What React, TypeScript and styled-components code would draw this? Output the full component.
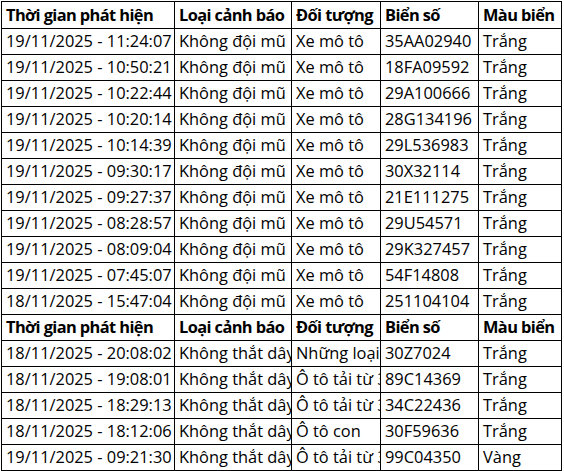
import React from "react";
import styled, { createGlobalStyle } from "styled-components";

const GlobalStyle = createGlobalStyle`
  html, body {
    margin: 0;
    padding: 0;
    background: #ffffff;
  }
`;

// Grid of cells, like an Excel sheet
const Sheet = styled.div`
  display: grid;
  grid-template-columns: 173px 117px 89px 98px 83px;
  grid-template-rows: 27px;
  grid-auto-rows: 26px;
  width: max-content;
  margin: 1px 0 0 1px;
  border-top: 1px solid #000;
  border-left: 1px solid #000;
  font-family: "Open Sans", "Noto Sans", sans-serif;
  font-size: 16.4px;
  color: #000;
`;

const Cell = styled.div<{ $head?: boolean }>`
  display: flex;
  align-items: flex-end;
  box-sizing: border-box;
  padding: 0 0 2px 4px;
  border-right: 1px solid #000;
  border-bottom: 1px solid #000;
  overflow: hidden;
  white-space: nowrap;
  line-height: 22px;
  font-weight: ${(p) => (p.$head ? 700 : 400)};
  letter-spacing: ${(p) => (p.$head ? "-0.6px" : "0")};
`;

const headers = ["Thời gian phát hiện", "Loại cảnh báo", "Đối tượng", "Biển số", "Màu biển"];

const helmetRows: string[][] = [
  ["19/11/2025 - 11:24:07", "35AA02940"],
  ["19/11/2025 - 10:50:21", "18FA09592"],
  ["19/11/2025 - 10:22:44", "29A100666"],
  ["19/11/2025 - 10:20:14", "28G134196"],
  ["19/11/2025 - 10:14:39", "29L536983"],
  ["19/11/2025 - 09:30:17", "30X32114"],
  ["19/11/2025 - 09:27:37", "21E111275"],
  ["19/11/2025 - 08:28:57", "29U54571"],
  ["19/11/2025 - 08:09:04", "29K327457"],
  ["19/11/2025 - 07:45:07", "54F14808"],
  ["18/11/2025 - 15:47:04", "251104104"],
].map(([time, plate]) => [time, "Không đội mũ", "Xe mô tô", plate, "Trắng"]);

const beltRows: string[][] = [
  ["18/11/2025 - 20:08:02", "Những loại xe khác", "30Z7024", "Trắng"],
  ["18/11/2025 - 19:08:01", "Ô tô tải từ 3,5 tấn", "89C14369", "Trắng"],
  ["18/11/2025 - 18:29:13", "Ô tô tải từ 3,5 tấn", "34C22436", "Trắng"],
  ["18/11/2025 - 18:12:06", "Ô tô con", "30F59636", "Trắng"],
  ["19/11/2025 - 09:21:30", "Ô tô tải từ 3,5 tấn", "99C04350", "Vàng"],
].map(([time, kind, plate, color]) => [time, "Không thắt dây an toàn", kind, plate, color]);

const HeaderRow = () => (
  <>
    {headers.map((h) => (
      <Cell key={h} $head>
        {h}
      </Cell>
    ))}
  </>
);

const DataRows = ({ rows }: { rows: string[][] }) => (
  <>
    {rows.map((row, i) =>
      row.map((value, j) => <Cell key={`${i}-${j}`}>{value}</Cell>)
    )}
  </>
);

const App: React.FC = () => {
  return (
    <>
      <GlobalStyle />
      <Sheet>
        <HeaderRow />
        <DataRows rows={helmetRows} />
        <HeaderRow />
        <DataRows rows={beltRows} />
      </Sheet>
    </>
  );
};

export default App;
